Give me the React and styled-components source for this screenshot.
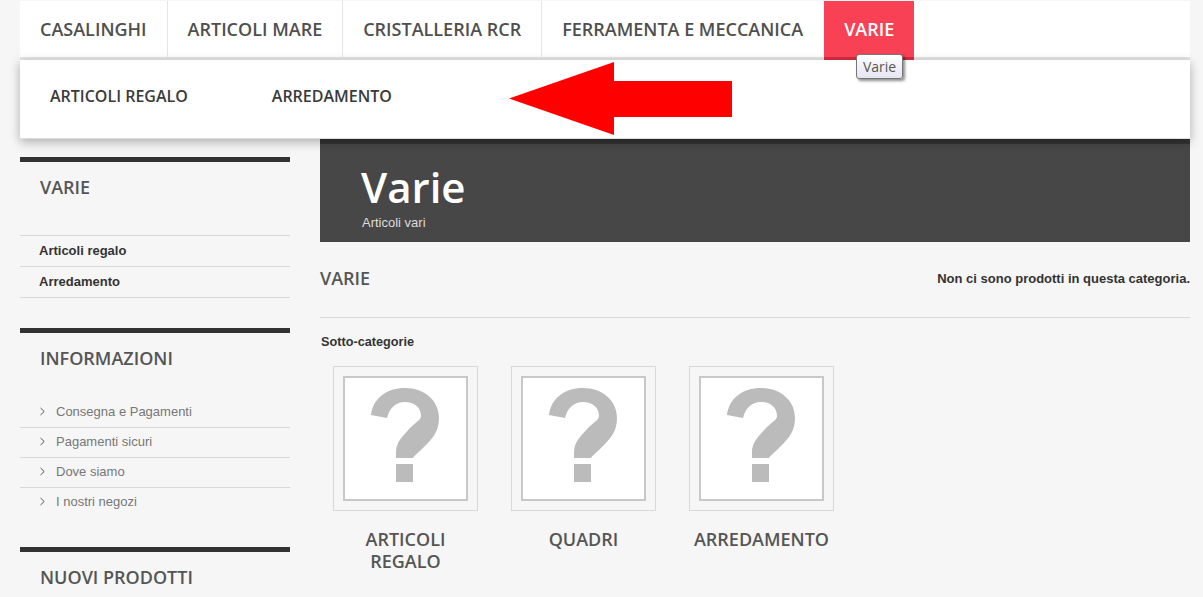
import React from 'react'
import styled, { createGlobalStyle } from 'styled-components'

const Global = createGlobalStyle`
html,body{margin:0;padding:0;height:100%;overflow:hidden;background:#f6f6f6;}
body{font-family:"Liberation Sans",Arial,sans-serif;color:#333;}
*{box-sizing:border-box;}
`
const Page = styled.div`
width:1170px;
margin:1px 0 0 20px;
`
const Header = styled.header`
position:relative;
z-index:5;
`
const Nav = styled.nav`
display:flex;
height:59px;
background:#fff;
border-bottom:3px solid #e5e5e5;
`
const NavItem = styled.a`
height:${p => (p.$active ? '59px' : '56px')};
margin-left:${p => (p.$active ? '1px' : '0')};
padding:0 20px;
display:flex;
align-items:center;
font-family:"Open Sans",sans-serif;
font-size:18px;
font-weight:600;
color:${p => (p.$active ? '#fff' : '#4f4f4f')};
background:${p => (p.$active ? '#f94155' : 'transparent')};
border-right:${p => (p.$plain ? 'none' : '1px solid #e5e5e5')};
border-bottom:${p => (p.$active ? '3px solid #c9283e' : 'none')};
`
const SubMenu = styled.div`
display:flex;
align-items:center;
gap:84px;
height:79px;
padding:0 30px 7px;
background:#fff;
border-bottom:1px solid #ddd;
box-shadow:0 3px 10px rgba(0,0,0,.3);
`
const SubLink = styled.a`
font-family:"Open Sans",sans-serif;
font-size:16px;
font-weight:600;
color:#3a3a3a;
`
const Arrow = styled.svg`
position:absolute;
left:489px;
top:61px;
`
const Tip = styled.div`
position:absolute;
left:836px;
top:53px;
width:47px;
height:25px;
display:flex;
align-items:center;
justify-content:center;
font-family:"Open Sans",sans-serif;
font-size:14px;
color:#575757;
background:linear-gradient(#fff,#e4e5f0);
border:1px solid #767676;
border-radius:3px;
box-shadow:2px 2px 3px rgba(0,0,0,.45);
`
const Columns = styled.div`
display:flex;
gap:30px;
`
const Sidebar = styled.aside`
width:270px;
flex:none;
padding-top:18px;
`
const Section = styled.section`
border-top:5px solid #333;
margin-bottom:${p => p.$gap || 30}px;
`
const SideTitle = styled.h3`
margin:0;
height:50px;
padding-left:20px;
display:flex;
align-items:center;
font-family:"Open Sans",sans-serif;
font-size:18px;
font-weight:600;
color:#555;
`
const CatList = styled.ul`
list-style:none;
margin:23px 0 0;
padding:0;
border-top:1px solid #d8d8d8;
`
const CatItem = styled.li`
height:31px;
padding:0 0 2px 19px;
display:flex;
align-items:center;
border-bottom:1px solid #d8d8d8;
font-size:13px;
font-weight:700;
color:#333;
`
const InfoList = styled.ul`
list-style:none;
margin:15px 0 0;
padding:0;
`
const InfoItem = styled.li`
height:30px;
padding:0 0 3px 20px;
display:flex;
align-items:center;
gap:11px;
border-bottom:1px solid #d8d8d8;
font-size:13px;
color:#777;
&:last-child{border-bottom:none;}
`
const Chevron = styled.svg`
flex:none;
`
const Main = styled.main`
flex:1;
`
const Banner = styled.div`
height:103px;
background:#474747;
border-top:5px solid #333;
padding:16px 0 0 41px;
color:#fff;
`
const BannerTitle = styled.h1`
margin:0;
font-family:"Open Sans",sans-serif;
font-size:42px;
line-height:54px;
font-weight:600;
`
const BannerSub = styled.div`
margin-left:1px;
margin-top:1px;
font-size:13px;
color:#ddd;
`
const TitleRow = styled.div`
display:flex;
align-items:center;
justify-content:space-between;
height:76px;
padding-bottom:3px;
border-bottom:1px solid #d8d8d8;
`
const MainTitle = styled.h2`
margin:0;
font-family:"Open Sans",sans-serif;
font-size:18px;
font-weight:600;
color:#555;
`
const Notice = styled.div`
font-size:13px;
font-weight:700;
color:#333;
`
const SubHead = styled.div`
margin:17px 0 0 1px;
font-size:12.7px;
line-height:15px;
font-weight:700;
color:#333;
`
const Cards = styled.div`
display:flex;
gap:33px;
margin:16px 0 0 13px;
`
const Card = styled.div`
width:145px;
`
const Thumb = styled.div`
height:145px;
padding:9px;
border:1px solid #d8d8d8;
`
const Placeholder = styled.div`
height:125px;
background:#fff;
border:2px solid #c8c8c8;
svg{display:block;}
`
const CardLabel = styled.div`
margin-top:17px;
text-align:center;
font-family:"Open Sans",sans-serif;
font-size:18px;
line-height:22px;
font-weight:600;
color:#555;
`

const NoImage = () => (
  <Placeholder>
    <svg width="121" height="121" viewBox="2 2 121 121">
      <path fill="#bbb" d="M28 39C30 22 44 12 62 12C82 12 96 25 96 42C96 55 90 62 82 70C75 77 70 81 70 82L53 82L53 76C53 66 60 60 67 52C73 46 78 44 78 40C78 31 71 26 62 26C52 26 46 33 44 42ZM53 88H70V106H53Z" />
    </svg>
  </Placeholder>
)

const categories = ['ARTICOLI REGALO', 'QUADRI', 'ARREDAMENTO']
const info = ['Consegna e Pagamenti', 'Pagamenti sicuri', 'Dove siamo', 'I nostri negozi']

export default function App() {
  return (
    <Page>
      <Global />
      <Header>
        <Nav>
          <NavItem>CASALINGHI</NavItem>
          <NavItem>ARTICOLI MARE</NavItem>
          <NavItem>CRISTALLERIA RCR</NavItem>
          <NavItem $plain>FERRAMENTA E MECCANICA</NavItem>
          <NavItem $active $plain>VARIE</NavItem>
        </Nav>
        <SubMenu>
          <SubLink>ARTICOLI REGALO</SubLink>
          <SubLink>ARREDAMENTO</SubLink>
        </SubMenu>
        <Arrow width="224" height="75" viewBox="0 0 224 75">
          <path fill="#f00" d="M0 36.5L105 0V19H223V55H105V73Z" />
        </Arrow>
        <Tip>Varie</Tip>
      </Header>
      <Columns>
        <Sidebar>
          <Section>
            <SideTitle>VARIE</SideTitle>
            <CatList>
              <CatItem>Articoli regalo</CatItem>
              <CatItem>Arredamento</CatItem>
            </CatList>
          </Section>
          <Section $gap={29}>
            <SideTitle>INFORMAZIONI</SideTitle>
            <InfoList>
              {info.map(t => (
                <InfoItem key={t}>
                  <Chevron width="5" height="9" viewBox="0 0 5 9">
                    <path fill="none" stroke="#555" strokeWidth="1" d="M.5 1L4.2 4.5L.5 8" />
                  </Chevron>
                  {t}
                </InfoItem>
              ))}
            </InfoList>
          </Section>
          <Section>
            <SideTitle>NUOVI PRODOTTI</SideTitle>
          </Section>
        </Sidebar>
        <Main>
          <Banner>
            <BannerTitle>Varie</BannerTitle>
            <BannerSub>Articoli vari</BannerSub>
          </Banner>
          <TitleRow>
            <MainTitle>VARIE</MainTitle>
            <Notice>Non ci sono prodotti in questa categoria.</Notice>
          </TitleRow>
          <SubHead>Sotto-categorie</SubHead>
          <Cards>
            {categories.map(c => (
              <Card key={c}>
                <Thumb><NoImage /></Thumb>
                <CardLabel>{c}</CardLabel>
              </Card>
            ))}
          </Cards>
        </Main>
      </Columns>
    </Page>
  )
}
